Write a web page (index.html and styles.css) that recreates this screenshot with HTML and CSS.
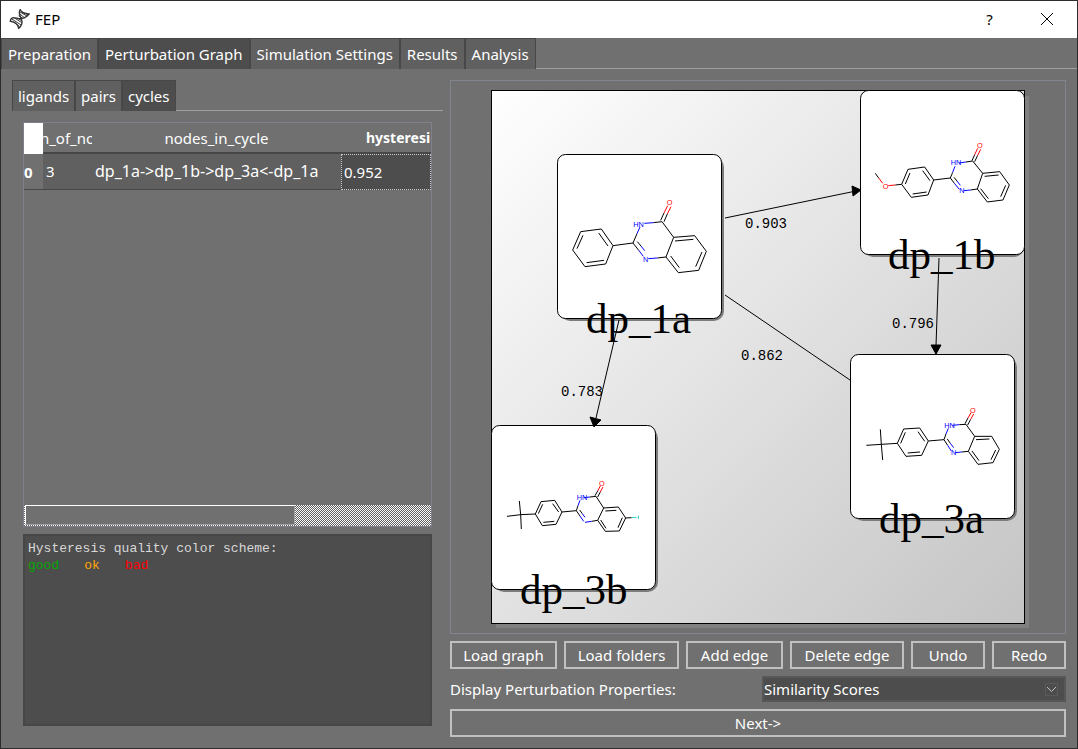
FILE: index.html
```html
<!DOCTYPE html>
<html lang="en">
<head>
<meta charset="utf-8">
<title>FEP</title>
<link rel="stylesheet" href="styles.css">
</head>
<body>
<div class="window">
  <header class="titlebar">
    <svg class="logo" width="22" height="22" viewBox="0 0 66 66" fill="none" stroke="#333" stroke-width="4" stroke-linecap="round">
      <path d="M4 40C6 20 24 34 36 32C50 30 54 26 60 18"/>
      <path d="M34 5C26 16 34 24 37 32C42 46 38 54 29 61"/>
      <path d="M34 5C38 16 50 16 60 18M4 40C14 42 26 44 29 61"/>
      <path stroke-width="3" d="M33 12L54 24M33 18L46 29M40 13L56 20M30 24L40 30M10 34L35 50M18 31L37 43M12 41L31 55M26 31L38 38"/>
    </svg>
    <h1 class="title">FEP</h1>
    <button class="caption" type="button" aria-label="Help">?</button>
    <button class="caption" type="button" aria-label="Close">
      <svg width="12" height="12" viewBox="0 0 12 12" stroke="#000" stroke-width="1"><path d="M0 0L12 12M12 0L0 12"/></svg>
    </button>
  </header>

  <nav class="tabs main-tabs" role="tablist">
    <button class="tab" type="button" role="tab">Preparation</button>
    <button class="tab active" type="button" role="tab" aria-selected="true">Perturbation Graph</button>
    <button class="tab" type="button" role="tab">Simulation Settings</button>
    <button class="tab" type="button" role="tab">Results</button>
    <button class="tab" type="button" role="tab">Analysis</button>
  </nav>

  <main class="content">
    <section class="left">
      <nav class="tabs" role="tablist">
        <button class="tab" type="button" role="tab">ligands</button>
        <button class="tab" type="button" role="tab">pairs</button>
        <button class="tab active" type="button" role="tab" aria-selected="true">cycles</button>
      </nav>
      <div class="panel">
        <div class="grid-view">
          <table class="cycles">
            <colgroup><col class="c-index"><col class="c-count"><col class="c-nodes"><col></colgroup>
            <thead>
              <tr><th class="corner"></th><th><span class="clip">n_of_no</span></th><th>nodes_in_cycle</th><th class="current">hysteresi</th></tr>
            </thead>
            <tbody>
              <tr><th class="index" scope="row">0</th><td>3</td><td class="path">dp_1a-&gt;dp_1b-&gt;dp_3a&lt;-dp_1a</td><td class="selected">0.952</td></tr>
            </tbody>
          </table>
          <div class="scrollbar"><div class="thumb"></div></div>
        </div>
        <div class="legend">
          <p>Hysteresis quality color scheme:</p>
          <p class="levels"><span class="good">good</span><span class="ok">ok</span><span class="bad">bad</span></p>
        </div>
      </div>
    </section>

    <section class="right">
      <div class="graph">
        <svg class="scene" viewBox="451 81 614 552">
          <defs>
            <linearGradient id="paper" x1="0" y1="0" x2="1" y2="1"><stop offset="0" stop-color="#fff"/><stop offset="1" stop-color="#c4c4c4"/></linearGradient>
          </defs>
          <rect x="496" y="96" width="533" height="532" fill="#808080"/>
          <rect x="491.500" y="90.500" width="533" height="533" fill="url(#paper)" stroke="#000"/>

          <g class="shadow">
            <rect x="560" y="157" width="164" height="164" rx="10"/>
            <rect x="863" y="94" width="161" height="163" rx="10"/>
            <rect x="853" y="357" width="164" height="164" rx="10"/>
            <rect x="494" y="428" width="164" height="164" rx="10"/>
          </g>
          <g class="card">
            <rect x="557.500" y="154.500" width="164" height="164" rx="8"/>
            <rect x="860.500" y="90.500" width="164" height="164" rx="8"/>
            <rect x="850.500" y="354.500" width="164" height="164" rx="8"/>
            <rect x="491.500" y="425.500" width="164" height="164" rx="8"/>
          </g>

          <g class="edge">
            <path d="M725 218L856 191M725 295L850 380M939 258L936 346M619 320L596 418"/>
            <path class="arrow" d="M852 186L861 190L853 196ZM931 345L941 345L936 354ZM590 417L601 420L594 427Z"/>
          </g>

          <g class="molecule" transform="translate(540 140) scale(.33333)">
            <path d="M98 330L122 275L184 267L219 317L197 372L135 380ZM111 326L129 286M176 279L204 318M140 368L192 361M219 317L279 309L291 281M279 309L297 332M292 305L303 318M340 248L366 245L401 292L464 287L499 334L476 391L415 398L378 351L401 292M352 354L378 351M362 241L372 219M372 245L382 222M405 303L460 298M486 336L467 380M392 348L418 383"/>
            <path class="n" d="M291 281L300 261M297 332L310 349M303 318L314 332M340 248L313 250M352 354L325 356"/>
            <path class="o" d="M372 219L383 197M382 222L393 200"/>
            <text class="n" x="280" y="261">HN</text><text class="n" x="309" y="365">N</text><text class="o" x="380" y="196">O</text>
          </g>
          <g class="molecule" transform="translate(850 85) scale(.33333)">
            <path d="M155 298L174 253L224 246L251 285L234 330L184 337ZM166 297L180 264M218 257L240 287M188 327L230 321M76 265L86 279M155 298L136 300M251 285L301 279L308 262M301 279L314 296M312 277L321 288M348 231L368 228L398 265L449 260L478 300L459 345L412 351L382 312L398 265M362 315L382 312M366 227L374 209M374 230L383 211M404 274L446 270M467 301L452 335M392 311L415 341"/>
            <path class="n" d="M308 262L315 244M314 296L328 313M321 288L331 301M348 231L327 234M362 315L341 317"/>
            <path class="o" d="M374 209L383 190M383 211L392 193M86 279L98 295M136 300L115 302"/>
            <text class="n" x="302" y="241">HN</text><text class="n" x="328" y="325">N</text><text class="o" x="381" y="188">O</text><text class="o" x="98" y="311">O</text>
          </g>
          <g class="molecule" transform="translate(840 345) scale(.33333)">
            <path d="M79 301L124 298M121 253L124 298L128 345M124 298L172 295L191 252L239 249L265 288L245 331L198 334L172 295M182 295L196 262M234 260L254 289M203 324L240 321M265 288L312 284L318 267M312 284L323 301M322 282L331 295M358 239L378 238L404 274L455 274L478 313L459 353L414 358L385 319L404 274M365 321L385 319M375 236L384 219M383 240L392 223M408 284L448 282M467 315L453 344M396 318L417 347"/>
            <path class="n" d="M318 267L325 250M323 301L334 318M331 295L341 308M358 239L337 241M365 321L345 323"/>
            <path class="o" d="M384 219L393 203M392 223L401 207"/>
            <text class="n" x="313" y="249">HN</text><text class="n" x="333" y="330">N</text><text class="o" x="390" y="203">O</text>
          </g>
          <g class="molecule" transform="translate(480 415) scale(.33333)">
            <path d="M81 304L122 299M118 258L122 299L124 342M122 299L166 297L183 260L224 256L246 291L228 328L187 332L166 297M175 296L188 268M218 266L236 291M190 322L223 319M246 291L289 287L294 272M289 287L300 303M299 285L307 296M330 246L348 244L371 279L415 276L437 309L418 348L376 349L353 316L371 279M335 319L353 316M345 242L353 228M353 246L361 231M376 288L409 286M427 308L414 338M362 315L378 340M437 309L455 308"/>
            <path class="n" d="M294 272L300 256M300 303L311 319M307 296L315 307M330 246L311 248M335 319L315 322"/>
            <path class="o" d="M353 228L361 213M361 231L369 216"/>
            <path class="i" d="M455 308L470 307M475 302L475 312"/>
            <text class="n" x="290" y="254">HN</text><text class="o" x="357" y="213">O</text>
          </g>

          <g class="score">
            <text x="745" y="228">0.903</text>
            <text x="892" y="328">0.796</text>
            <text x="741" y="360">0.862</text>
            <text x="561" y="396">0.783</text>
          </g>
          <g class="name">
            <text x="586" y="333">dp_1a</text>
            <text x="888" y="269">dp_1b</text>
            <text x="879" y="533">dp_3a</text>
            <text x="520" y="604">dp_3b</text>
          </g>
        </svg>
      </div>
      <div class="actions">
        <button class="btn" type="button">Load graph</button>
        <button class="btn" type="button">Load folders</button>
        <button class="btn" type="button">Add edge</button>
        <button class="btn" type="button">Delete edge</button>
        <button class="btn" type="button">Undo</button>
        <button class="btn" type="button">Redo</button>
      </div>
      <div class="property">
        <label for="property">Display Perturbation Properties:</label>
        <div class="combo">
          <select id="property"><option>Similarity Scores</option></select>
          <svg class="chevron" width="13" height="13" viewBox="0 0 13 13" fill="none" stroke="#c0c0c0"><rect x=".5" y=".5" width="12" height="12" stroke="#5a5a5a"/><path d="M2 4L6.500 8.500L11 4"/></svg>
        </div>
      </div>
      <button class="btn" type="button">Next-&gt;</button>
    </section>
  </main>
</div>
</body>
</html>
```
FILE: styles.css
```css
* { box-sizing: border-box; }

body {
  margin: 0;
  background: #707070;
  color: #fff;
  font: 15px/20px "Noto Sans", "Open Sans", sans-serif;
}

button, select { font: inherit; color: inherit; }
p, h1 { margin: 0; }

.window {
  display: flex;
  flex-direction: column;
  min-height: 100vh;
  border: 1px solid #2c2c2c;
}

.titlebar {
  display: flex;
  align-items: center;
  height: 37px;
  padding: 0 2px 2px 8px;
  background: #fff;
  color: #000;
}
.logo { margin-right: 4px; }
.title { flex: 1; font-size: 15px; font-weight: 400; }
.caption {
  width: 57px;
  height: 35px;
  padding: 0;
  border: 0;
  background: none;
}

.tabs { display: flex; position: relative; }
.tabs::after {
  content: "";
  flex: 1;
  border-bottom: 1px solid #a0a0a0;
}
.tab {
  height: 31px;
  padding: 0 5px 1px;
  border: 1px solid #474747;
  border-bottom: 0;
  background: #606060;
  white-space: nowrap;
}
.main-tabs .tab { padding: 0 6px 1px; }
.tab.active { background: #4d4d4d; }

.content {
  flex: 1;
  display: grid;
  grid-template-columns: 431fr 616fr;
  gap: 7px;
  padding: 11px;
}

.left { display: flex; flex-direction: column; min-width: 0; }
.panel {
  flex: 1;
  display: flex;
  flex-direction: column;
  gap: 7px;
  padding: 11px;
}

.grid-view {
  flex: 1;
  display: flex;
  flex-direction: column;
  justify-content: space-between;
  overflow: hidden;
  border: 1px solid #80808c;
}
.cycles {
  width: 100%;
  table-layout: fixed;
  border-collapse: separate;
  border-spacing: 0;
}
.c-index { width: 19px; }
.c-count { width: 49px; }
.c-nodes { width: 249px; }
.cycles th, .cycles td {
  padding: 0 3px;
  overflow: hidden;
  white-space: nowrap;
}
.cycles thead th {
  height: 31px;
  border-bottom: 2px solid #474747;
  font-weight: 400;
}
.cycles thead .corner { border: 0; background: #fff; }
.cycles thead .current { padding: 0 0 0 25px; text-align: left; font-size: 14px; font-weight: 700; }
.clip { display: flex; justify-content: center; margin: 0 -3px; }
.cycles td {
  height: 36px;
  padding-bottom: 1px;
  border-bottom: 1px solid #474747;
  background: #606060;
}
.cycles .path { font-size: 16px; }
.cycles .index { padding: 0; border-bottom: 1px solid #474747; text-align: left; }
.cycles .selected { border: 1px dotted #c8c8c8; padding: 0 2px 1px; background: #4d4d4d; }

.scrollbar {
  display: flex;
  height: 21px;
  padding-left: 1px;
  background: repeating-conic-gradient(#fff 0 25%, #606060 0 50%) 0 0 / 2px 2px;
}
.thumb {
  flex: 269;
  margin-bottom: 1px;
  border: 1px solid;
  border-color: #fff #a0a0a0 #a0a0a0 #fff;
  background: #707070;
}
.scrollbar::after { content: ""; flex: 137; }

.legend {
  height: 192px;
  padding: 4px 3px;
  border: 2px solid #474747;
  background: #4d4d4d;
  color: #d8d8d8;
  font: 13px/17px "Liberation Mono", monospace;
}
.levels { display: flex; gap: 25px; }
.good { color: #0a0; }
.ok { color: #ffa500; }
.bad { color: #f00; }

.right { display: flex; flex-direction: column; gap: 7px; min-width: 0; }
.graph {
  flex: 1;
  display: flex;
  border: 1px solid #80848c;
}
.scene { display: block; flex: 1; min-width: 0; }
.shadow { fill: #7c7c7c; }
.card { fill: #fff; stroke: #000; }
.edge { fill: none; stroke: #000; }
.arrow { fill: #000; }
.molecule { fill: none; stroke: #000; stroke-width: 3px; }
.molecule .n { stroke: #00f; }
.molecule .o { stroke: #f00; }
.molecule .i { stroke: #3cc; }
.molecule text { font: 22px "Liberation Sans", sans-serif; stroke-width: 0; }
.molecule text.n { fill: #00f; }
.molecule text.o { fill: #f00; }
.score { font: 14px "Liberation Mono", monospace; }
.name { font: 43px "Liberation Serif", serif; }

.actions {
  display: grid;
  grid-template-columns: 107fr 115fr 97fr 114fr 74fr 74fr;
  gap: 7px;
}
.btn {
  height: 28px;
  padding: 0 4px;
  border: 2px solid #c0c0c0;
  background: #707070;
  white-space: nowrap;
}

.property {
  display: grid;
  grid-template-columns: 312fr 304fr;
  align-items: center;
}
.combo { position: relative; }
.combo select {
  display: block;
  width: 100%;
  height: 26px;
  padding: 0;
  border: 2px solid #575757;
  border-radius: 0;
  background: #4d4d4d;
  appearance: none;
}
.chevron { position: absolute; top: 7px; right: 8px; pointer-events: none; }
```
